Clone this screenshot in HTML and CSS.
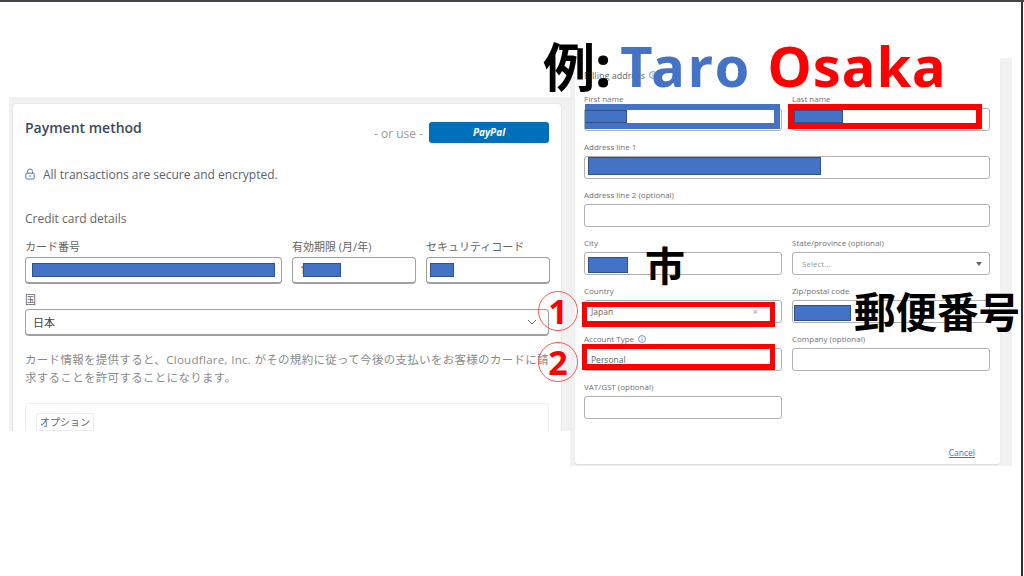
FILE: index.html
```html
<!DOCTYPE html>
<html lang="ja">
<head>
<meta charset="utf-8">
<title>Payment and billing</title>
<link rel="stylesheet" href="styles.css">
</head>
<body>
<main class="slide">
  <section class="shot shot-pay">
    <div class="pay-card">
      <header class="pay-head">
        <h2>Payment method</h2>
        <div class="alt"><span>- or use -</span><button class="paypal">PayPal</button></div>
      </header>
      <p class="secure">
        <svg class="lock" viewBox="0 0 12 14" width="10" height="12"><path d="M3 6V4a3 3 0 0 1 6 0v2" fill="none" stroke="#4a7fc1" stroke-width="1.2"/><rect x="1" y="6" width="10" height="7" rx="1" fill="none" stroke="#4a7fc1" stroke-width="1.2"/><circle cx="6" cy="9.5" r="1" fill="#4a7fc1"/></svg>
        All transactions are secure and encrypted.
      </p>
      <h3>Credit card details</h3>
      <div class="card-row">
        <label class="pf"><span>カード番号</span><div class="pbox"><i class="mask m-card"></i></div></label>
        <label class="pf"><span>有効期限 (月/年)</span><div class="pbox"><b class="peek">1</b><i class="mask m-exp"></i></div></label>
        <label class="pf"><span>セキュリティコード</span><div class="pbox"><i class="mask m-cvc"></i></div></label>
      </div>
      <label class="pf pf-country"><span>国</span>
        <div class="pbox pbox-sel">日本
          <svg class="chev" viewBox="0 0 10 6" width="10" height="6"><path d="M1 1l4 4 4-4" fill="none" stroke="#666" stroke-width="1"/></svg>
        </div>
      </label>
      <p class="terms">カード情報を提供すると、Cloudflare, Inc. がその規約に従って今後の支払いをお客様のカードに請求することを許可することになります。</p>
      <div class="options"><span class="tag">オプション</span></div>
    </div>
  </section>

  <section class="shot shot-bill">
    <div class="bill-card">
      <h2 class="bill-title">Billing address
        <svg viewBox="0 0 10 10" width="8" height="8"><circle cx="5" cy="5" r="4.3" fill="none" stroke="#4a7fc1"/><path d="M5 4.2v3M5 2.4v1" stroke="#4a7fc1"/></svg>
      </h2>
      <div class="bill-grid">
        <div class="f"><span>First name</span><div class="box"></div></div>
        <div class="f"><span>Last name</span><div class="box"></div></div>
        <div class="f wide"><span>Address line 1</span><div class="box"><i class="mask m-addr"></i></div></div>
        <div class="f wide"><span>Address line 2 (optional)</span><div class="box"></div></div>
        <div class="f"><span>City</span><div class="box"><i class="mask m-city"></i></div></div>
        <div class="f"><span>State/province (optional)</span><div class="box sel"><em>Select...</em><u class="caret"></u></div></div>
        <div class="f"><span>Country</span><div class="box"></div></div>
        <div class="f"><span>Zip/postal code</span><div class="box"><i class="mask m-zip"></i></div></div>
        <div class="f"><span>Account Type
          <svg viewBox="0 0 10 10" width="8" height="8"><circle cx="5" cy="5" r="4.3" fill="none" stroke="#4a7fc1"/><path d="M5 4.2v3M5 2.4v1" stroke="#4a7fc1"/></svg></span><div class="box"></div></div>
        <div class="f"><span>Company (optional)</span><div class="box"></div></div>
        <div class="f"><span>VAT/GST (optional)</span><div class="box"></div></div>
      </div>
      <a class="cancel" href="#">Cancel</a>
    </div>
  </section>

  <div class="mark mark-first"><i class="mark-fill"></i></div>
  <div class="mark mark-last"><i class="mark-fill"></i></div>
  <div class="mark mark-country"><span>Japan</span><b>×</b></div>
  <div class="mark mark-type"><span>Personal</span></div>

  <div class="big example">例<span class="colon">:</span><span class="blue">Taro</span> <span class="red">Osaka</span></div>
  <div class="big city-note">市</div>
  <div class="big zip-note">郵便番号</div>
  <div class="num num-1">1</div>
  <div class="num num-2">2</div>
  <div class="edge-right"></div>
</main>
</body>
</html>
```
FILE: styles.css
```css
* { box-sizing: border-box; }
html, body { margin: 0; padding: 0; }
body { background: #fff; font-family: "Open Sans", "Noto Sans CJK JP", sans-serif; }
.slide { position: relative; width: 1024px; height: 576px; overflow: hidden; background: #fff; border-top: 2px solid #44474b; }

.shot { position: absolute; background: #f1f1f1; }
.shot-pay { left: 9px; top: 95px; width: 561px; height: 334px; padding: 6px 8px 0 3px; overflow: hidden; }
.shot-bill { left: 570px; top: 56px; width: 442px; height: 408px; padding: 0 12px 2px 5px; }

.mask { display: block; position: absolute; background: #4472c4; border: 1px solid #2f528f; }

/* payment */
.pay-card { height: 340px; background: #fff; border: 1px solid #e6e6e6; border-radius: 4px; padding: 0 12px; color: #5f6368; font-size: 12px; }
.pay-head { display: flex; justify-content: space-between; height: 61px; padding-top: 14px; }
.pay-head h2 { margin: 0; font-size: 14px; line-height: 20px; font-weight: 600; color: #3c4858; }
.alt { display: flex; gap: 6px; align-items: flex-start; padding-top: 4px; color: #999; font-size: 12px; line-height: 23px; }
.paypal { width: 120px; height: 21px; padding: 0; background: #0070ba; border: 0; border-radius: 3px; color: #fff; font: italic 700 10px/21px "Open Sans", sans-serif; }
.secure { margin: 0; height: 20px; display: flex; align-items: center; gap: 8px; font-size: 12px; line-height: 20px; color: #5a6270; }
.lock { margin-bottom: 3px; }
.pay-card h3 { margin: 24px 0 0; font-size: 12px; line-height: 20px; font-weight: 400; color: #666; }
.card-row { display: grid; grid-template-columns: 257px 124px 124px; gap: 10px; margin-top: 10px; }
.pf { display: block; }
.pf > span { display: block; font-size: 11px; line-height: 16px; color: #666; }
.pbox { position: relative; height: 27px; margin-top: 2px; border: 1px solid #a0a0a0; border-bottom-width: 2px; border-radius: 4px; background: #fff; }
.m-card { left: 6px; top: 5px; width: 243px; height: 14px; }
.m-exp { left: 10px; top: 5px; width: 38px; height: 14px; }
.m-cvc { left: 3px; top: 5px; width: 24px; height: 14px; }
.peek { position: absolute; left: 7px; top: 6px; font-size: 10px; line-height: 12px; font-weight: 400; color: #555; }
.pf-country { margin-top: 8px; }
.pf-country .pbox { margin-top: 1px; }
.pbox-sel { display: flex; align-items: center; padding: 0 7px; font-size: 11px; color: #444; }
.chev { margin-left: auto; margin-right: 4px; }
.terms { margin: 15px 0 0; width: 525px; font-size: 11.5px; line-height: 18px; letter-spacing: 0.3px; color: #8a8a8a; }
.options { height: 60px; margin-top: 16px; padding: 9px 10px; border: 1px solid #ececec; border-radius: 4px; }
.tag { display: inline-block; padding: 0 3px; border: 1px solid #ececec; border-radius: 2px; font-size: 10px; line-height: 16px; color: #666; }

/* billing */
.bill-card { position: relative; height: 100%; background: #fff; border-radius: 0 0 3px 3px; box-shadow: 0 1px 1px #ddd; padding: 13px 10px 0 9px; color: #666; }
.bill-title { margin: 0; height: 22px; font-size: 9px; line-height: 10px; font-weight: 400; color: #666; display: flex; gap: 4px; }
.bill-grid { display: grid; grid-template-columns: 198px 198px; column-gap: 10px; row-gap: 0; }
.f { height: 48px; }
.f.wide { grid-column: 1 / -1; }
.f > span { display: flex; gap: 4px; align-items: center; height: 12px; font-size: 8px; line-height: 12px; color: #707070; }
.box { position: relative; height: 23px; margin-top: 3px; border: 1px solid #b0b0b0; border-radius: 3px; background: #fff; }
.m-addr { left: 3px; top: 0; width: 233px; height: 18px; }
.m-city { left: 3px; top: 4px; width: 40px; height: 16px; }
.m-zip { left: 1px; top: 4px; width: 57px; height: 16px; }
.sel { display: flex; align-items: center; padding: 0 9px; }
.sel em { font-style: normal; font-size: 8px; color: #999; }
.caret { margin-left: auto; width: 0; height: 0; border: 3px solid transparent; border-top: 4px solid #666; border-bottom: 0; margin-right: -2px; }
.cancel { position: absolute; right: 25px; bottom: 5px; font-size: 8.5px; line-height: 12px; color: #3f72c4; }

/* annotations */
.mark { position: absolute; border-style: solid; border-color: #f00; border-width: 5px 5px 6px; background: #fff; display: flex; align-items: center; justify-content: space-between; font-size: 8.5px; color: #666; padding: 0 4px; }
.mark-first { left: 585px; top: 102px; width: 195px; height: 25px; border-color: #4472c4; border-width: 6px; }
.mark-last { left: 788px; top: 102px; width: 194px; height: 25px; border-width: 6px; }
.mark-fill { position: absolute; top: 0; height: 13px; background: #4472c4; border: 1px solid #2f528f; }
.mark-first .mark-fill { left: -6px; width: 42px; border-left: 0; }
.mark-last .mark-fill { left: 0; width: 49px; }
.mark-country { left: 582px; top: 300px; width: 193px; height: 25px; padding-bottom: 5px; }
.mark-type { left: 582px; top: 342px; width: 193px; height: 26px; padding-top: 5px; }
.mark-country b { font-weight: 400; font-size: 9px; color: #999; margin-right: 8px; }

.big { position: absolute; font-family: "Noto Sans CJK JP", sans-serif; font-weight: 700; color: #000; white-space: nowrap; }
.example { left: 543px; top: 24px; font-size: 52px; line-height: 78px; }
.colon { font-family: "Noto Sans", sans-serif; font-size: 58px; }
.blue { margin-left: 9px; color: #4472c4; font-family: "Noto Sans", sans-serif; font-size: 56px; letter-spacing: 3px; }
.red { margin-left: 3px; color: #f00; font-family: "Noto Sans", sans-serif; font-size: 56px; letter-spacing: 1px; }
.city-note { left: 645px; top: 238px; font-size: 40px; line-height: 48px; }
.zip-note { left: 854px; top: 284px; font-size: 41.5px; line-height: 48px; }
.num { position: absolute; left: 538px; width: 40px; height: 40px; border: 1px solid #f55; border-radius: 50%; color: #f00; font: 700 34px/38px "Noto Sans", sans-serif; text-align: center; }
.num-1 { top: 289px; }
.num-2 { top: 340px; }
.edge-right { position: absolute; right: 1px; top: -2px; bottom: 0; width: 2px; background: #2c2f33; }
```
